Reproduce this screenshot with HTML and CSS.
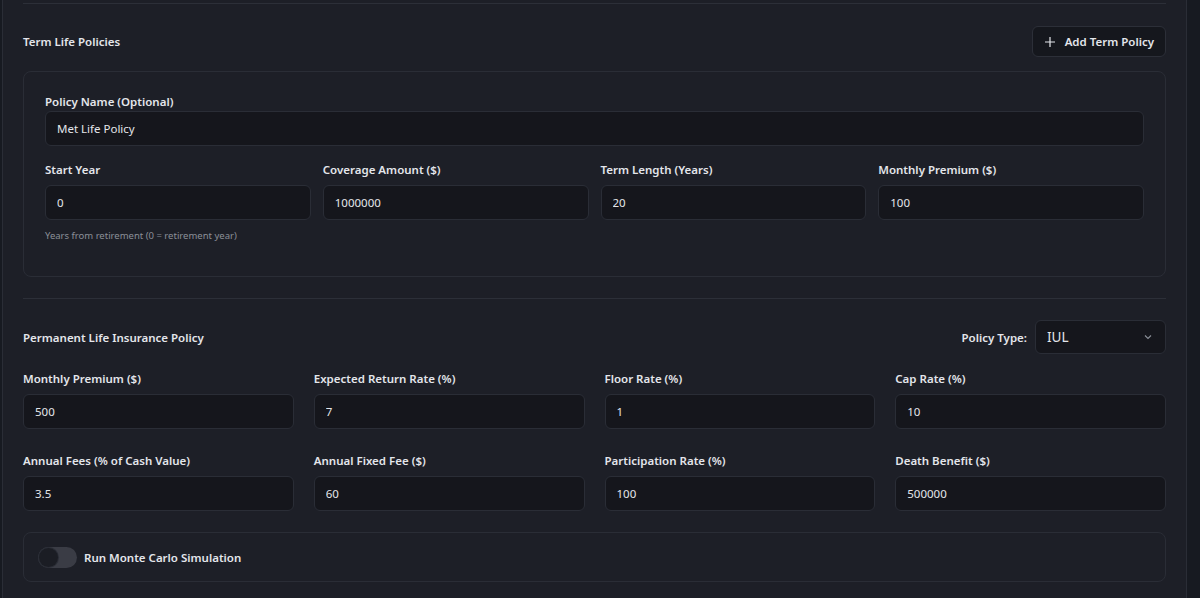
FILE: index.html
```html
<!DOCTYPE html>
<html lang="en">
<head>
    <meta charset="UTF-8">
    <meta name="viewport" content="width=device-width, initial-scale=1.0">
    <title>Life Insurance</title>
    <link rel="stylesheet" href="styles.css">
</head>
<body>

    <div class="card">
        <div class="section term">
            <div class="section-head">
                <h3>Term Life Policies</h3>
                <button type="button" class="btn">
                    <svg width="10" height="10" viewBox="0 0 10 10"><path d="M5 0v10M0 5h10" stroke="currentColor" stroke-width="1.2" fill="none"/></svg>
                    Add Term Policy
                </button>
            </div>

            <div class="policy">
                <label class="label first">Policy Name (Optional)</label>
                <input type="text" class="field" value="Met Life Policy">

                <div class="grid four tight">
                    <div class="cell">
                        <label class="label">Start Year</label>
                        <input type="text" class="field" value="0">
                        <div class="hint">Years from retirement (0 = retirement year)</div>
                    </div>
                    <div class="cell">
                        <label class="label">Coverage Amount ($)</label>
                        <input type="text" class="field" value="1000000">
                    </div>
                    <div class="cell">
                        <label class="label">Term Length (Years)</label>
                        <input type="text" class="field" value="20">
                    </div>
                    <div class="cell">
                        <label class="label">Monthly Premium ($)</label>
                        <input type="text" class="field" value="100">
                    </div>
                </div>
            </div>
        </div>

        <div class="section perm">
            <div class="section-head">
                <h3>Permanent Life Insurance Policy</h3>
                <div class="type">
                    <span class="type-label">Policy Type:</span>
                    <div class="select">
                        <span>IUL</span>
                        <svg width="10" height="10" viewBox="0 0 10 10"><path d="M2 3.5l3 3 3-3" stroke="#8b8f98" stroke-width="1.1" fill="none"/></svg>
                    </div>
                </div>
            </div>

            <div class="grid four wide">
                <div class="cell">
                    <label class="label">Monthly Premium ($)</label>
                    <input type="text" class="field" value="500">
                </div>
                <div class="cell">
                    <label class="label">Expected Return Rate (%)</label>
                    <input type="text" class="field" value="7">
                </div>
                <div class="cell">
                    <label class="label">Floor Rate (%)</label>
                    <input type="text" class="field" value="1">
                </div>
                <div class="cell">
                    <label class="label">Cap Rate (%)</label>
                    <input type="text" class="field" value="10">
                </div>
                <div class="cell">
                    <label class="label">Annual Fees (% of Cash Value)</label>
                    <input type="text" class="field" value="3.5">
                </div>
                <div class="cell">
                    <label class="label">Annual Fixed Fee ($)</label>
                    <input type="text" class="field" value="60">
                </div>
                <div class="cell">
                    <label class="label">Participation Rate (%)</label>
                    <input type="text" class="field" value="100">
                </div>
                <div class="cell">
                    <label class="label">Death Benefit ($)</label>
                    <input type="text" class="field" value="500000">
                </div>
            </div>

            <div class="monte">
                <span class="toggle"><span class="knob"></span></span>
                <span class="monte-text">Run Monte Carlo Simulation</span>
            </div>
        </div>
    </div>

</body>
</html>
```

FILE: styles.css
```css
html, body { margin: 0; height: 100%; overflow: hidden; }
body { background: #171a21; font-family: "Noto Sans", "Open Sans", sans-serif; color: #e4e6eb; font-size: 11.5px; padding: 0 13px 0 2px; }
.card { background: #1d1f27; border: 1px solid #2a2d36; border-radius: 8px; margin-top: -40px; padding: 0 20px 40px; }
.section { border-top: 1px solid #2c2f38; }
.term { margin-top: 42px; padding-top: 22px; }
.perm { margin-top: 21px; padding-top: 21px; }
.section-head { display: flex; justify-content: space-between; align-items: center; }
h3 { margin: 0; font-size: 11.5px; font-weight: 600; }
.btn { display: flex; align-items: center; gap: 10px; height: 31px; padding: 0 11px 0 12px; background: #15171d; border: 1px solid #2c2f38; border-radius: 6px; color: #e4e6eb; font: inherit; font-weight: 600; font-size: 11.5px; }
.policy { margin-top: 14px; border: 1px solid #2a2d36; border-radius: 8px; padding: 21px 21px 34px; }
.label { display: block; font-weight: 600; line-height: 18px; margin-bottom: 6px; }
.label.first { margin-bottom: 0; }
.field { display: block; box-sizing: border-box; width: 100%; height: 35px; background: #15161c; border: 1px solid #2a2d36; border-radius: 6px; color: #e4e6eb; font: inherit; font-size: 11.5px; padding: 0 11px; outline: none; }
.grid { display: grid; grid-template-columns: repeat(4, 1fr); }
.tight { column-gap: 12px; margin-top: 15px; }
.wide { column-gap: 20px; row-gap: 23px; margin-top: 16px; }
.hint { margin-top: 9px; font-size: 9.5px; color: #8b8f98; }
.type { display: flex; align-items: center; gap: 8px; }
.type-label { font-weight: 600; }
.select { box-sizing: border-box; width: 131px; height: 34px; display: flex; align-items: center; justify-content: space-between; padding: 0 12px 0 11px; background: #15161c; border: 1px solid #2a2d36; border-radius: 6px; font-size: 13.5px; }
.monte { margin-top: 21px; height: 50px; box-sizing: border-box; border: 1px solid #2a2d36; border-radius: 8px; display: flex; align-items: center; padding: 0 14px; gap: 7px; }
.toggle { width: 39px; height: 21px; border-radius: 11px; background: #3a3c45; position: relative; }
.knob { position: absolute; left: 1px; top: 1px; width: 19px; height: 19px; border-radius: 50%; background: #1b1d24; box-shadow: 0 0 0 1px #2a2d36; }
.monte-text { font-weight: 600; }
```
